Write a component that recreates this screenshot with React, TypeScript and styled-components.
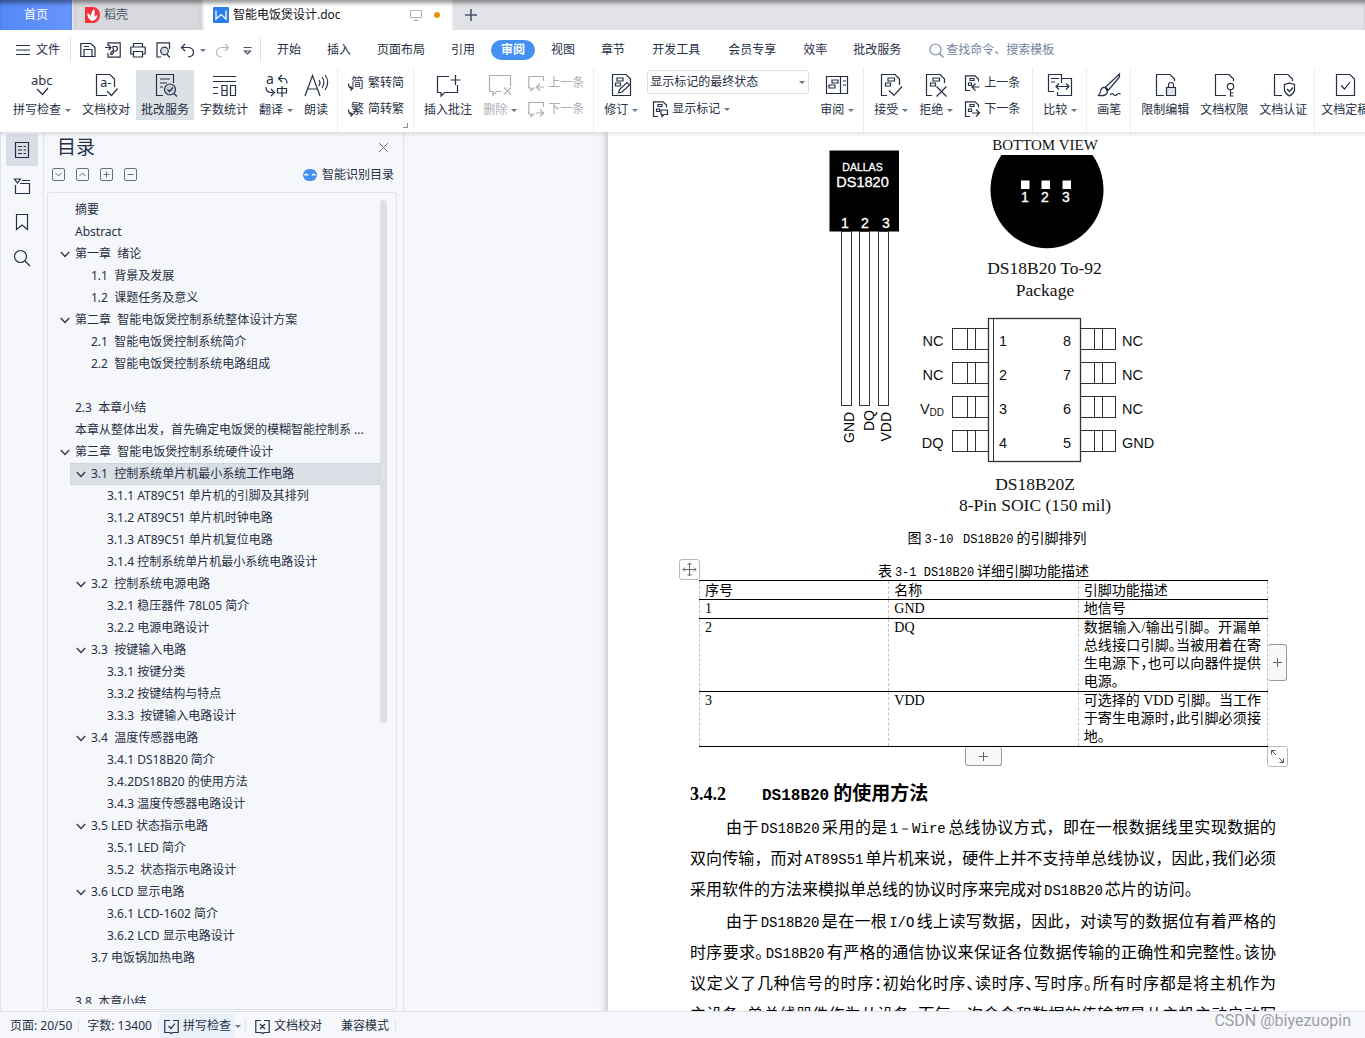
import React from 'react';
import styled, { createGlobalStyle, css } from 'styled-components';

const ink = '#262f45';
const line = '#dfe2e8';
const panelBg = '#f6f7fa';

const GlobalStyle = createGlobalStyle`
  * { box-sizing: border-box; }
  body {
    margin: 0;
    font-family: "Noto Sans", "Noto Sans CJK SC", sans-serif;
    font-size: 12px;
    line-height: 16px;
    color: ${ink};
    background: #fff;
  }
  button, input, select { font: inherit; color: inherit; }
  button { border: 0; padding: 0; background: none; cursor: pointer; white-space: nowrap; }
`;

const Shell = styled.div`
  display: flex;
  flex-direction: column;
  height: 100vh;
  overflow: hidden;
`;

/* ---------- window tabs ---------- */
const TabBar = styled.header`
  display: flex;
  flex: none;
  height: 30px;
  gap: 2px;
  background: #e1e3e6;
  box-shadow: inset 0 5px 4px -2px rgba(0, 0, 0, 0.42);
`;

const Tab = styled.button<{ $kind: 'home' | 'idle' | 'active' }>`
  display: flex;
  align-items: center;
  gap: 4px;
  box-shadow: inset 0 5px 4px -2px rgba(0, 0, 0, 0.42);
  ${(p) => p.$kind === 'home' && css`
    width: 72px;
    justify-content: center;
    color: #fff;
    background: linear-gradient(90deg, #5488f7, #6796fb);
  `}
  ${(p) => p.$kind === 'idle' && css`
    width: 127px;
    padding-left: 11px;
    background: #d7d9dd;
    color: #4a5163;
  `}
  ${(p) => p.$kind === 'active' && css`
    width: 250px;
    padding: 0 13px 0 10px;
    background: #fff;
    color: #111;
  `}
`;

const TabTitle = styled.span`
  flex: 1;
  text-align: left;
`;

const UnsavedDot = styled.i`
  width: 6px;
  height: 6px;
  margin-left: 8px;
  border-radius: 50%;
  background: #e8940c;
`;

const NewTab = styled.button`
  width: 32px;
  display: grid;
  place-items: center;
`;

/* ---------- menu row ---------- */
const MenuBar = styled.nav`
  display: flex;
  flex: none;
  align-items: center;
  height: 38px;
  padding: 2px 0 0 16px;
  background: #fff;
`;

const FileButton = styled.button`
  display: flex;
  align-items: center;
  gap: 6px;
`;

const MenuRule = styled.i<{ $left: number; $right: number }>`
  width: 1px;
  height: 24px;
  background: ${line};
  margin: 0 ${(p) => p.$right}px 0 ${(p) => p.$left}px;
`;

const QuickTools = styled.div`
  display: flex;
  align-items: center;
  gap: 9px;
`;

const IconButton = styled.button`
  display: flex;
  align-items: center;
  gap: 5px;
`;

const MenuItem = styled.button<{ $wide?: boolean }>`
  padding: 0 ${(p) => (p.$wide ? 14 : 13)}px;
`;

const MenuPill = styled.button`
  margin: 0 3px;
  padding: 0 10px;
  height: 20px;
  border-radius: 10px;
  background: #4490f3;
  color: #fff;
  font-weight: 700;
`;

const Search = styled.label`
  display: flex;
  align-items: center;
  gap: 2px;
  margin-left: 15px;
  color: #7d8ba5;
`;

const SearchInput = styled.input`
  width: 160px;
  border: 0;
  padding: 0;
  outline: 0;
  background: none;
  &::placeholder { color: #75839f; opacity: 1; }
`;

/* ---------- ribbon ---------- */
const Ribbon = styled.div`
  display: flex;
  flex: none;
  height: 64px;
  padding-left: 8px;
  background: #fff;
  overflow: hidden;
`;

const Group = styled.div`
  position: relative;
  display: flex;
  flex: none;
  gap: 1px;
  padding-top: 2px;
`;

const RibbonRule = styled.i<{ $tight?: boolean }>`
  flex: none;
  width: 1px;
  margin: ${(p) => (p.$tight ? '0 1px 0 2px' : '0 5px 0 4px')};
  background: #eceef1;
`;

const Tool = styled.button<{ $on?: boolean; $off?: boolean }>`
  flex: none;
  display: flex;
  flex-direction: column;
  align-items: center;
  height: 50px;
  padding: 3px 5px 0;
  gap: 5px;
  background: ${(p) => (p.$on ? '#dce1e6' : 'none')};
  color: ${(p) => (p.$off ? '#a9adb5' : ink)};
`;

const ToolLabel = styled.span`
  display: flex;
  align-items: center;
  gap: 4px;
`;

const Caret = styled.i`
  width: 0;
  height: 0;
  border: 3px solid transparent;
  border-top: 3px solid #6b7689;
  border-bottom: 0;
`;

const Stack = styled.div<{ $end?: number }>`
  display: flex;
  flex-direction: column;
  gap: 10px;
  padding: 5px 5px 0;
  margin-right: ${(p) => p.$end ?? 0}px;
`;

const StackTool = styled.button<{ $off?: boolean }>`
  display: flex;
  align-items: center;
  gap: 4px;
  height: 16px;
  color: ${(p) => (p.$off ? '#a9adb5' : ink)};
`;

const MarkupStack = styled.div`
  display: flex;
  flex-direction: column;
  gap: 7px;
  margin: 0 5px 0 3px;
`;

const SelectBox = styled.div`
  position: relative;
  width: 162px;
  height: 24px;
`;

const Select = styled.select`
  width: 100%;
  height: 100%;
  padding: 0 2px;
  appearance: none;
  border: 1px solid #dcdfe4;
  border-radius: 3px;
  background: #fff;
`;

const SelectCaret = styled(Caret)`
  position: absolute;
  right: 4px;
  top: 11px;
  pointer-events: none;
`;

const MarkupTool = styled(StackTool)`
  padding-left: 5px;
`;

const Launcher = styled.i`
  position: absolute;
  right: 1px;
  bottom: 4px;
  width: 5px;
  height: 5px;
  border: solid #858e9e;
  border-width: 0 1px 1px 0;
`;

/* ---------- work area ---------- */
const Work = styled.div`
  position: relative;
  display: flex;
  flex: 1;
  min-height: 0;
  background: ${panelBg};
  border-bottom: 1px solid ${line};
  &::before {
    content: '';
    position: absolute;
    inset: 0 0 auto 0;
    height: 5px;
    background: linear-gradient(rgba(60, 66, 80, 0.14), transparent);
    pointer-events: none;
    z-index: 2;
  }
`;

const Rail = styled.nav`
  flex: none;
  width: 44px;
  padding: 2px 5px;
  border: solid ${line};
  border-width: 0 1px;
  display: flex;
  flex-direction: column;
  gap: 4px;
`;

const RailButton = styled.button<{ $on?: boolean }>`
  width: 32px;
  height: 32px;
  display: grid;
  place-items: center;
  border-radius: 2px;
  background: ${(p) => (p.$on ? '#d9dee6' : 'none')};
`;

const Outline = styled.aside`
  flex: none;
  width: 360px;
  display: flex;
  flex-direction: column;
  padding: 3px 6px 0 3px;
  border-right: 1px solid ${line};
`;

const OutlineHead = styled.div`
  display: flex;
  align-items: center;
  justify-content: space-between;
  padding: 0 8px 0 10px;
  height: 24px;
`;

const OutlineTitle = styled.h2`
  margin: 0;
  font-size: 19px;
  line-height: 24px;
  font-weight: 400;
`;

const OutlineTools = styled.div`
  display: flex;
  align-items: center;
  gap: 10px;
  height: 30px;
  padding: 1px 3px 0 5px;
`;

const SmartButton = styled.button`
  display: flex;
  align-items: center;
  gap: 5px;
  margin-left: auto;
`;

const TreeBox = styled.div`
  flex: 1;
  min-height: 0;
  display: flex;
  margin-top: 3px;
  margin-bottom: 1px;
  padding: 6px 10px 5px;
  border: 1px solid ${line};
  border-radius: 3px;
`;

const Tree = styled.ul`
  flex: 1;
  min-width: 0;
  margin: 0;
  padding: 0 0 0 12px;
  list-style: none;
  overflow: hidden;
`;

const TreeItem = styled.li`
  height: 22px;
`;

const TreeRow = styled.button<{ $level: number; $on?: boolean }>`
  display: flex;
  align-items: center;
  width: 100%;
  height: 22px;
  padding-left: ${(p) => p.$level * 16 - 16}px;
  background: ${(p) => (p.$on ? '#dadfe6' : 'none')};
  box-shadow: ${(p) => (p.$on ? 'inset 0 0 0 1px #d0d6df' : 'none')};
`;

const Twist = styled.span`
  flex: none;
  display: grid;
  width: 10px;
  margin-left: -10px;
  margin-right: 5px;
`;

const TreeText = styled.span<{ $plain: boolean }>`
  padding-left: ${(p) => (p.$plain ? 5 : 0)}px;
  padding-right: 10px;
  white-space: pre;
  overflow: hidden;
  text-overflow: ellipsis;
`;

const Thumb = styled.i`
  flex: none;
  width: 7px;
  height: 65%;
  margin-top: 1px;
  margin-right: -1px;
  border-radius: 4px;
  background: #dee1e4;
`;

/* ---------- document ---------- */
const Canvas = styled.main`
  flex: 1;
  min-width: 0;
  padding-left: 204px;
  overflow: hidden;
`;

const Paper = styled.article`
  min-height: 100%;
  padding: 0 82px;
  background: #fff;
  color: #000;
  box-shadow: -2px 0 7px rgba(60, 66, 80, 0.28);
`;

const Column = styled.div`
  width: 100%;
  max-width: 586px;
`;

const Figure = styled.figure`
  margin: 0;
`;

const Drawing = styled.svg`
  display: block;
  width: 100%;
  height: auto;
`;

const Mono = styled.span`
  font-family: "Liberation Mono", monospace;
  font-size: 14px;
  line-height: 1;
  margin: 0 2px;
`;

const MonoSmall = styled(Mono)`
  font-size: 12px;
  margin: 0 3px;
`;

const MonoBold = styled(Mono)`
  font-size: 16px;
  margin: 0 4px 0 0;
`;

const Serif = styled.span`
  font-family: "Liberation Serif", serif;
`;

const Trim = styled.span`
  font-feature-settings: "halt";
`;

const FigCaption = styled.figcaption`
  padding-top: 7px;
  font-size: 14px;
  line-height: 18px;
  text-align: center;
  text-indent: 28px;
  white-space: pre;
`;

const TableWrap = styled.div`
  position: relative;
  margin: 15px 8px 0 9px;
`;

const Table = styled.table`
  width: 100%;
  table-layout: fixed;
  border-collapse: collapse;
  font-size: 14px;
  line-height: 18px;
`;

const TableCaption = styled.caption`
  margin: 0;
`;

const cellStyle = css`
  padding: 0 6px 0 5px;
  vertical-align: top;
  text-align: left;
  font-weight: 400;
  border: solid #000;
  border-width: 1px 0;
  &:nth-child(n) { border-left: 1px dashed #c3c3c3; }
  &:last-child { border-right: 1px dashed #c3c3c3; }
`;

const Th = styled.th`${cellStyle}`;
const Td = styled.td`
  ${cellStyle}
  font-family: "Liberation Serif", "Noto Sans CJK SC", serif;
`;

const CellLine = styled.span<{ $last?: boolean; $trim?: boolean }>`
  display: block;
  white-space: nowrap;
  text-align: justify;
  text-align-last: ${(p) => (p.$last ? 'left' : 'justify')};
  font-feature-settings: ${(p) => (p.$trim ? '"halt"' : 'normal')};
`;

const Handle = styled.button<{ $at: 'move' | 'row' | 'column' | 'size' }>`
  position: absolute;
  display: grid;
  place-items: center;
  background: #fff;
  border: 1px solid #b9b9b9;
  border-radius: 3px;
  ${(p) => p.$at === 'move' && css`left: -20px; top: -3px; width: 21px; height: 21px;`}
  ${(p) => p.$at === 'size' && css`right: -20px; bottom: -20px; width: 21px; height: 21px;`}
  ${(p) => p.$at === 'row' && css`
    left: calc(50% - 19px); bottom: -19px; width: 37px; height: 19px;
    border-top: 0; background: #f8f8f8; border-color: #999;
  `}
  ${(p) => p.$at === 'column' && css`
    right: -19px; bottom: 66px; width: 19px; height: 37px;
    border-left: 0; background: #f8f8f8; border-color: #999;
  `}
`;

const Heading = styled.h3`
  display: flex;
  align-items: baseline;
  margin: 32px 0 4px;
  font-size: 19px;
  line-height: 28px;
  font-weight: 700;
`;

const HeadingNumber = styled.span`
  width: 72px;
  font-family: "Liberation Serif", serif;
  font-size: 18px;
`;

const Paragraph = styled.p`
  margin: 0 0 1px;
  font-size: 16px;
  line-height: 31px;
`;

const TextLine = styled.span<{ $indent?: boolean; $last?: boolean; $trim?: boolean }>`
  display: block;
  white-space: nowrap;
  padding-left: ${(p) => (p.$indent ? 36 : 0)}px;
  text-align: justify;
  text-align-last: ${(p) => (p.$last ? 'left' : 'justify')};
  font-feature-settings: ${(p) => (p.$trim ? '"halt"' : 'normal')};
`;

/* ---------- status bar ---------- */
const StatusBar = styled.footer`
  display: flex;
  flex: none;
  align-items: center;
  height: 26px;
  padding: 2px 14px 0 10px;
  background: ${panelBg};
  white-space: nowrap;
`;

const StatusRule = styled.i<{ $left?: number; $right?: number }>`
  width: 1px;
  height: 14px;
  background: ${line};
  margin: 0 ${(p) => p.$right ?? 8}px 0 ${(p) => p.$left ?? 6}px;
`;

const StatusButton = styled.button<{ $tint?: boolean }>`
  display: flex;
  align-items: center;
  gap: 4px;
  height: 24px;
  padding: 0 4px;
  background: ${(p) => (p.$tint ? '#e9f1fb' : 'none')};
`;

const StatusText = styled.span`
  margin-left: 15px;
`;

const Watermark = styled.span`
  margin-left: auto;
  padding-bottom: 10px;
  font-family: Roboto, sans-serif;
  font-size: 16px;
  color: #9c9fa5;
`;

/* ---------- icons ---------- */
type GlyphProps = { size?: number; w?: number; box?: number; children: React.ReactNode; color?: string };
const Glyph = ({ size = 24, w, box = 24, children, color = 'currentColor' }: GlyphProps) => (
  <svg
    width={w ?? size}
    height={size}
    viewBox={`0 0 ${w ?? box} ${box}`}
    overflow="visible"
    fill="none"
    stroke={color}
    strokeWidth={1.2}
    aria-hidden="true"
  >
    {children}
  </svg>
);

const GlyphText = ({ x, y, s, children }: { x: number; y: number; s: number; children: string }) => (
  <text x={x} y={y} fontSize={s} fill="currentColor" stroke="none">{children}</text>
);

const docEdge = 'M8 22.5H2.5V1.5H16L20.5 6V10';
const marks = <path d="M9 5h6.500v3H9zM6.500 10h5v3h-5z" />;

const icons = {
  spell: (
    <Glyph w={26}>
      <GlyphText x={2} y={12} s={13}>abc</GlyphText>
      <path d="M8 16l5.500 5.500L19 15" />
    </Glyph>
  ),
  proof: (
    <Glyph>
      <path d="M13 22.500H2.500V1.500H16L20.500 6V14" />
      <GlyphText x={6} y={14} s={13}>a-</GlyphText>
      <path d="M13 18l4.500 4.500L23.500 15.500" />
    </Glyph>
  ),
  correct: (
    <Glyph>
      <path d="M10 22.500H3.500V1.500H20.500V10M7 6h10M7 10h7M7 14h3" />
      <circle cx="17" cy="16.500" r="5.500" fill="#c9ced6" />
      <path d="M14.500 16.500l2 2 3.500-4M21 20.500l3 3" />
    </Glyph>
  ),
  count: (
    <Glyph>
      <path d="M1 3.500h23M1 8.500h23M1 14.500h5M1 20.500h5M10 12.500h5v10h-5zM10 17.500h5M18.500 12.500h5v10h-5z" />
    </Glyph>
  ),
  translate: (
    <Glyph>
      <GlyphText x={2} y={11} s={14}>a</GlyphText>
      <path d="M18 2l-3.500 3.500L18 9M15 5.500h4.500q3.500 0 3.500 5M2 14q0 5.500 5 5.500h2M7 16l3.500 3.500L7 23M13.500 15.500h9v4.500h-9zM18 13v11" />
    </Glyph>
  ),
  read: (
    <Glyph>
      <path d="M1 23L8.500 2.500L16 23M3.500 16h10M15 7q2 2.500 0 6M18 4q4 5 0 11M21 2q5.500 7 0 15" />
    </Glyph>
  ),
  comment: (
    <Glyph w={26}>
      <path d="M14 3.500H2.500V19.500H6V23l3.500-3.500H22.500V12M20.500 2v10M15.500 7h10" />
    </Glyph>
  ),
  remove: (
    <Glyph>
      <path d="M22.500 13V2.500H1.500V18.500H5V22l3.500-3.500H13M16 14.500l7 7M23 14.500l-7 7" />
    </Glyph>
  ),
  revise: (
    <Glyph>
      <path d="M3.500 1.500H17L21.500 6V22.500H3.500zM8 5h6v3H8zM6.500 10h5v3h-5z" />
      <path d="M9.500 20l1-3.500L18 9.500l2.500 2.500L13 19z" fill="#fff" />
    </Glyph>
  ),
  pane: (
    <Glyph>
      <path d="M1.500 3.500h21v17h-21zM15.500 3.500v17M7 7h6v3H7zM4 12h6v3H4zM18 8h3M18 12h3" />
    </Glyph>
  ),
  accept: (
    <Glyph>
      <path d="M8 22.500H2.500V1.500H16L20.500 6V12" />
      {marks}
      <path d="M10 17.500l5 5 8-9" />
    </Glyph>
  ),
  reject: (
    <Glyph>
      <path d={docEdge} />
      {marks}
      <path d="M12.500 13.500l10 10M22.500 13.500l-10 10" />
    </Glyph>
  ),
  compare: (
    <Glyph w={26}>
      <path d="M7 18.500H1.500V1.500H14.500V5.500H24.500V22.500H10.500V19M4 5.500h8M4 9h4M9 13.500h13M12 10.500l-3 3 3 3M19 10.500l3 3-3 3M14.500 5.500V10" />
    </Glyph>
  ),
  brush: (
    <Glyph>
      <path d="M22.500 1L8.500 14l3 3L22.500 4zM8 14.500q-4-.5-4.500 4Q3 22 .8 22.500q8.500 1 9.500-3 .5-2-2.300-5M13 22q2-2.500 3.500-.5t3.500 0 3.500 0" />
    </Glyph>
  ),
  restrict: (
    <Glyph>
      <path d="M11 22.500H3.500V1.500H17L21.500 6V8" />
      <path d="M13.500 14.500h9v8h-9z" fill="#dfe2e8" />
      <path d="M15.500 14v-2q0-2.500 2.500-2.500t2.500 2.500v2" />
    </Glyph>
  ),
  permit: (
    <Glyph>
      <path d="M14 22.500H3.500V1.500H17L21.500 6V8" />
      <circle cx="18.500" cy="13.500" r="3.200" />
      <path d="M18.500 17v6.500M18.500 20h3M18.500 23h3" />
    </Glyph>
  ),
  certify: (
    <Glyph>
      <path d="M11 22.500H3.500V1.500H17L21.500 6V8M18.500 10l5 1.500v6q-1 3.500-5 5.500-4-2-5-5.500v-6zM16 16l2.500 2.500 3.500-4" />
    </Glyph>
  ),
  final: (
    <Glyph>
      <path d="M3.500 1.500H17L21.500 6V22.500H3.500zM8 12.500l3.500 3.500 5.500-7" />
    </Glyph>
  ),
};

const SmallConvert = ({ char }: { char: string }) => (
  <Glyph size={16} box={16}>
    <GlyphText x={3} y={12} s={13}>{char}</GlyphText>
    <path d="M.500 8.500q0 5 4 5M2.500 11.500l2 2-2 2" />
  </Glyph>
);

const SmallComment = ({ dir }: { dir: 'back' | 'next' }) => (
  <Glyph size={16} box={16}>
    <path d="M15.500 6V1.500H.800V13H3V15.500L5.500 13H7" />
    {dir === 'back' ? <path d="M16 12H9M12 8.500L8.500 12l3.500 3.500" /> : <path d="M8 12h7.500M12 8.500l3.500 3.500-3.500 3.500" />}
  </Glyph>
);

const SmallRevision = ({ dir }: { dir: 'back' | 'next' | 'show' }) => (
  <Glyph size={16} box={16}>
    <path d="M6 15.500H1.500V.800H11L14.500 4V6.500M6 3.500h4v2H6zM4.500 8h3v2.500h-3z" />
    {dir === 'back' && <path d="M15.500 12H8.500M11.500 8.500L8 12l3.500 3.500" />}
    {dir === 'next' && <path d="M8 12h7M12 8.500l3.500 3.500-3.500 3.500" />}
    {dir === 'show' && <path d="M9 9h6.500v4.500H12l-2 2v-2H9z" />}
  </Glyph>
);

const SquareToggle = ({ d }: { d: string }) => (
  <svg width="14" height="14" viewBox="0 0 14 14" fill="none" stroke="#697180" aria-hidden="true">
    <rect x="0.500" y="0.500" width="12" height="12" rx="1.500" />
    <path d={d} />
  </svg>
);

const Plus = () => (
  <svg width="11" height="11" viewBox="0 0 11 11" stroke="#666" aria-hidden="true">
    <path d="M5.500 1v9M1 5.500h9" />
  </svg>
);

/* ---------- ribbon pieces ---------- */
type ToolButtonProps = { icon: React.ReactNode; label: string; caret?: boolean; on?: boolean; off?: boolean };
const ToolButton = ({ icon, label, caret, on, off }: ToolButtonProps) => (
  <Tool type="button" $on={on} $off={off}>
    {icon}
    <ToolLabel>{label}{caret && <Caret />}</ToolLabel>
  </Tool>
);

/* ---------- outline data ---------- */
type Node = { t: string; l: number; open?: boolean; on?: boolean };
const outline: Node[] = [
  { t: '摘要', l: 1 },
  { t: 'Abstract', l: 1 },
  { t: '第一章  绪论', l: 1, open: true },
  { t: '1.1  背景及发展', l: 2 },
  { t: '1.2  课题任务及意义', l: 2 },
  { t: '第二章  智能电饭煲控制系统整体设计方案', l: 1, open: true },
  { t: '2.1  智能电饭煲控制系统简介', l: 2 },
  { t: '2.2  智能电饭煲控制系统电路组成', l: 2 },
  { t: '', l: 1 },
  { t: '2.3  本章小结', l: 1 },
  { t: '本章从整体出发，首先确定电饭煲的模糊智能控制系 ...', l: 1 },
  { t: '第三章  智能电饭煲控制系统硬件设计', l: 1, open: true },
  { t: '3.1  控制系统单片机最小系统工作电路', l: 2, open: true, on: true },
  { t: '3.1.1 AT89C51 单片机的引脚及其排列', l: 3 },
  { t: '3.1.2 AT89C51 单片机时钟电路', l: 3 },
  { t: '3.1.3 AT89C51 单片机复位电路', l: 3 },
  { t: '3.1.4 控制系统单片机最小系统电路设计', l: 3 },
  { t: '3.2  控制系统电源电路', l: 2, open: true },
  { t: '3.2.1 稳压器件 78L05 简介', l: 3 },
  { t: '3.2.2 电源电路设计', l: 3 },
  { t: '3.3  按键输入电路', l: 2, open: true },
  { t: '3.3.1 按键分类', l: 3 },
  { t: '3.3.2 按键结构与特点', l: 3 },
  { t: '3.3.3  按键输入电路设计', l: 3 },
  { t: '3.4  温度传感器电路', l: 2, open: true },
  { t: '3.4.1 DS18B20 简介', l: 3 },
  { t: '3.4.2DS18B20 的使用方法', l: 3 },
  { t: '3.4.3 温度传感器电路设计', l: 3 },
  { t: '3.5 LED 状态指示电路', l: 2, open: true },
  { t: '3.5.1 LED 简介', l: 3 },
  { t: '3.5.2  状态指示电路设计', l: 3 },
  { t: '3.6 LCD 显示电路', l: 2, open: true },
  { t: '3.6.1 LCD-1602 简介', l: 3 },
  { t: '3.6.2 LCD 显示电路设计', l: 3 },
  { t: '3.7 电饭锅加热电路', l: 2 },
  { t: '', l: 1 },
  { t: '3.8  本章小结', l: 1 },
];

/* ---------- pinout drawing ---------- */
const sans = '"Liberation Sans", sans-serif';
const serif = '"Liberation Serif", serif';
const leftPins = ['NC', 'NC', 'V', 'DQ'];
const rightPins = ['NC', 'NC', 'NC', 'GND'];
const pinTop = [329, 363, 397, 431];

const Pinout = () => (
  <Drawing viewBox="690 132 586 390" role="img" aria-label="DS18B20">
    <rect x="829.500" y="150.500" width="69.500" height="81" fill="#000" />
    <g fontFamily={sans} fill="#fff" stroke="#fff" strokeWidth="0.300" textAnchor="middle">
      <text x="862.500" y="171" fontSize="10.500">DALLAS</text>
      <text x="862.500" y="186.500" fontSize="14.500">DS1820</text>
      <text x="845" y="227.500" fontSize="14">1</text>
      <text x="865" y="227.500" fontSize="14">2</text>
      <text x="886" y="227.500" fontSize="14">3</text>
    </g>
    <g fill="#fff" stroke="#333">
      {[841.5, 859.5, 878.5].map((x) => <rect key={x} x={x} y="231.500" width="10" height="174" />)}
    </g>
    <g fontFamily={sans} fontSize="14" fill="#000">
      <text transform="translate(854 443) rotate(-90)">GND</text>
      <text transform="translate(873.500 431) rotate(-90)">DQ</text>
      <text transform="translate(890.500 441.500) rotate(-90)">VDD</text>
    </g>
    <path d="M1001.500 155H1092.500A56.500 58.500 0 1 1 1001.500 155Z" fill="#000" />
    <g fill="#fff">
      <rect x="1021" y="180.500" width="8.500" height="8.500" />
      <rect x="1041.500" y="180.500" width="8.500" height="8.500" />
      <rect x="1062.500" y="180.500" width="8.500" height="8.500" />
    </g>
    <g fontFamily={sans} fontSize="14" fill="#fff" stroke="#fff" strokeWidth="0.300" textAnchor="middle">
      <text x="1025" y="201.500">1</text>
      <text x="1045" y="201.500">2</text>
      <text x="1066" y="201.500">3</text>
    </g>
    <g fontFamily={serif} fill="#111" textAnchor="middle">
      <text x="1045" y="150" fontSize="15">BOTTOM VIEW</text>
      <text x="1044.500" y="274" fontSize="17.500">DS18B20 To-92</text>
      <text x="1045" y="295.500" fontSize="17.500">Package</text>
      <text x="1035" y="490" fontSize="17.500">DS18B20Z</text>
      <text x="1035" y="511" fontSize="17.500">8-Pin SOIC (150 mil)</text>
    </g>
    <g fill="#fff" stroke="#333">
      {pinTop.map((y) => (
        <g key={y}>
          <rect x="952.500" y={y - 0.5} width="36" height="21" />
          <path d={`M967.500 ${y}v20M975.500 ${y}v20`} />
          <rect x="1080.500" y={y - 0.5} width="35" height="21" />
          <path d={`M1094.500 ${y}v20M1102.500 ${y}v20`} />
        </g>
      ))}
      <rect x="988.500" y="318.500" width="92" height="143" strokeWidth="1.300" />
      <path d="M993.500 319v142" />
    </g>
    <g fontFamily={sans} fontSize="14.500" fill="#111">
      {pinTop.map((y, i) => (
        <g key={y}>
          {leftPins[i] === 'V' ? (
            <text x="944" y={y + 17} textAnchor="end">V<tspan fontSize="10" dy="2">DD</tspan></text>
          ) : (
            <text x="943.500" y={y + 16.500} textAnchor="end">{leftPins[i]}</text>
          )}
          <text x="999" y={y + 17}>{i + 1}</text>
          <text x="1071" y={y + 17} textAnchor="end">{8 - i}</text>
          <text x="1122" y={y + 16.500}>{rightPins[i]}</text>
        </g>
      ))}
    </g>
  </Drawing>
);

export default function App() {
  return (
    <Shell>
      <GlobalStyle />
      <TabBar>
        <Tab type="button" $kind="home">首页</Tab>
        <Tab type="button" $kind="idle">
          <svg width="15" height="16" viewBox="0 0 15 16" aria-hidden="true">
            <path d="M0 0H8a7 8 0 0 1 0 16H0z" fill="#f5303a" />
            <path d="M7 14Q1.500 11 2.500 6Q6.500 8 7 12Q4.500 6 9 2Q11 7 8 12Q9 8.500 12.500 8Q12 13 7 14z" fill="#fff" />
          </svg>
          <TabTitle>稻壳</TabTitle>
        </Tab>
        <Tab type="button" $kind="active">
          <svg width="16" height="16" viewBox="0 0 16 16" aria-hidden="true">
            <rect width="16" height="16" rx="1" fill="#2b7de9" />
            <path d="M3 3.500V12L8 7.500 13 12V3.500" fill="none" stroke="#fff" strokeWidth="1.300" />
          </svg>
          <TabTitle>智能电饭煲设计.doc</TabTitle>
          <svg width="12" height="12" viewBox="0 0 12 12" fill="none" stroke="#a9b1c4" aria-hidden="true">
            <path d="M.5 1.500h11v7H.500zM6 8.500v3M3.500 11.500h5" />
          </svg>
          <UnsavedDot />
        </Tab>
        <NewTab type="button" aria-label="+">
          <svg width="12" height="12" viewBox="0 0 12 12" stroke="#47546b" strokeWidth="1.600" aria-hidden="true">
            <path d="M6 0v12M0 6h12" />
          </svg>
        </NewTab>
      </TabBar>

      <MenuBar>
        <FileButton type="button">
          <svg width="14" height="10" viewBox="0 0 14 10" stroke={ink} aria-hidden="true">
            <path d="M0 .5h14M0 5h14M0 9.500h14" />
          </svg>
          文件
        </FileButton>
        <MenuRule $left={10} $right={9} />
        <QuickTools>
          <IconButton type="button" aria-label="保存">
            <Glyph size={16} box={16}><path d="M.800 1.500H11L15 5.500V14.500H.800zM4 14V7.500H12V14M4 4.500h5" /></Glyph>
          </IconButton>
          <IconButton type="button" aria-label="输出">
            <Glyph size={16} box={16}><path d="M3 4V.800H15.200V15.200H3V11M0 5.500h5.500M3.500 3l2.500 2.500L3.500 8M8 4.500h3.500q2 2 0 4.500H8.500q-2.500 0-3 3 2 1 3-1.500z" /></Glyph>
          </IconButton>
          <IconButton type="button" aria-label="打印">
            <Glyph size={16} box={16}><path d="M3.500 5V1.500h9V5M3.500 12H.800V5H15.200V12H12.500M3.500 9.500h9v5.500h-9z" /></Glyph>
          </IconButton>
          <IconButton type="button" aria-label="预览">
            <Glyph size={16} box={16}>
              <path d="M6 15H2V.800H14.500V7M12 12.500l3 3" />
              <circle cx="9.500" cy="9" r="3.800" fill="#d5dae2" />
            </Glyph>
          </IconButton>
          <IconButton type="button" aria-label="撤销">
            <Glyph size={15} box={15}><path d="M5 1L1.500 4.500 5 8M2 4.500h6.500q5 .5 5 5 0 4-5.500 4.500" /></Glyph>
            <Caret />
          </IconButton>
          <IconButton type="button" aria-label="恢复">
            <Glyph size={15} box={15} color="#b5b8bd"><path d="M10 1l3.500 3.500L10 8M13 4.500H6.500q-5 .5-5 5 0 4 5.500 4.500" /></Glyph>
          </IconButton>
          <IconButton type="button" aria-label="更多">
            <Glyph size={16} box={16} color="#4a5265"><path d="M4.500 5.500h8M5.500 9l3 3 3-3z" /></Glyph>
          </IconButton>
        </QuickTools>
        <MenuRule $left={5} $right={3} />
        <MenuItem type="button">开始</MenuItem>
        <MenuItem type="button">插入</MenuItem>
        <MenuItem type="button">页面布局</MenuItem>
        <MenuItem type="button">引用</MenuItem>
        <MenuPill type="button">审阅</MenuPill>
        <MenuItem type="button">视图</MenuItem>
        <MenuItem type="button">章节</MenuItem>
        <MenuItem type="button" $wide>开发工具</MenuItem>
        <MenuItem type="button" $wide>会员专享</MenuItem>
        <MenuItem type="button">效率</MenuItem>
        <MenuItem type="button">批改服务</MenuItem>
        <Search>
          <Glyph size={15} box={15}><circle cx="6.500" cy="6.500" r="5.500" /><path d="M10.500 10.500l4 4" /></Glyph>
          <SearchInput type="text" placeholder="查找命令、搜索模板" aria-label="查找命令、搜索模板" />
        </Search>
      </MenuBar>

      <Ribbon>
        <Group>
          <ToolButton icon={icons.spell} label="拼写检查" caret />
          <ToolButton icon={icons.proof} label="文档校对" />
          <ToolButton icon={icons.correct} label="批改服务" on />
          <ToolButton icon={icons.count} label="字数统计" />
          <ToolButton icon={icons.translate} label="翻译" caret />
          <ToolButton icon={icons.read} label="朗读" />
        </Group>
        <RibbonRule />
        <Group>
          <Stack>
            <StackTool type="button"><SmallConvert char="简" />繁转简</StackTool>
            <StackTool type="button"><SmallConvert char="繁" />简转繁</StackTool>
          </Stack>
          <Launcher />
        </Group>
        <RibbonRule />
        <Group>
          <ToolButton icon={icons.comment} label="插入批注" />
          <ToolButton icon={icons.remove} label="删除" caret off />
          <Stack>
            <StackTool type="button" $off><SmallComment dir="back" />上一条</StackTool>
            <StackTool type="button" $off><SmallComment dir="next" />下一条</StackTool>
          </Stack>
        </Group>
        <RibbonRule />
        <Group>
          <ToolButton icon={icons.revise} label="修订" caret />
          <MarkupStack>
            <SelectBox>
              <Select aria-label="显示标记的最终状态" defaultValue="final">
                <option value="final">显示标记的最终状态</option>
              </Select>
              <SelectCaret />
            </SelectBox>
            <MarkupTool type="button"><SmallRevision dir="show" />显示标记<Caret /></MarkupTool>
          </MarkupStack>
          <ToolButton icon={icons.pane} label="审阅" caret />
        </Group>
        <RibbonRule />
        <Group>
          <ToolButton icon={icons.accept} label="接受" caret />
          <ToolButton icon={icons.reject} label="拒绝" caret />
          <Stack $end={3}>
            <StackTool type="button"><SmallRevision dir="back" />上一条</StackTool>
            <StackTool type="button"><SmallRevision dir="next" />下一条</StackTool>
          </Stack>
        </Group>
        <RibbonRule />
        <Group><ToolButton icon={icons.compare} label="比较" caret /></Group>
        <RibbonRule />
        <Group><ToolButton icon={icons.brush} label="画笔" /></Group>
        <RibbonRule />
        <Group>
          <ToolButton icon={icons.restrict} label="限制编辑" />
          <ToolButton icon={icons.permit} label="文档权限" />
          <ToolButton icon={icons.certify} label="文档认证" />
        </Group>
        <RibbonRule $tight />
        <Group><ToolButton icon={icons.final} label="文档定稿" /></Group>
      </Ribbon>

      <Work>
        <Rail>
          <RailButton type="button" $on aria-label="目录">
            <Glyph size={18} box={18}><path d="M2.500 1.500h13v15h-13zM5 5.500h4M10.500 5.500h2.500M5 9h4M10.500 9h2.500M5 12.500h4M10.500 12.500h2.500" /></Glyph>
          </RailButton>
          <RailButton type="button" aria-label="章节">
            <Glyph size={18} box={18}><path d="M1.500 2h6l-3 4zM9 3.500h8M2.500 8V16.500H16.500V6.500H7" /></Glyph>
          </RailButton>
          <RailButton type="button" aria-label="书签">
            <Glyph size={18} box={18}><path d="M3.500 1.500h11v15L9 12l-5.500 4.500z" /></Glyph>
          </RailButton>
          <RailButton type="button" aria-label="查找">
            <Glyph size={18} box={18}><circle cx="7.500" cy="7.500" r="6" /><path d="M12 12l5 5" /></Glyph>
          </RailButton>
        </Rail>

        <Outline>
          <OutlineHead>
            <OutlineTitle>目录</OutlineTitle>
            <IconButton type="button" aria-label="关闭">
              <svg width="11" height="11" viewBox="0 0 11 11" stroke="#6c7484" aria-hidden="true"><path d="M1 1l9 9M10 1l-9 9" /></svg>
            </IconButton>
          </OutlineHead>
          <OutlineTools>
            <IconButton type="button" aria-label="展开"><SquareToggle d="M3.500 5l3 3 3-3" /></IconButton>
            <IconButton type="button" aria-label="收起"><SquareToggle d="M3.500 8l3-3 3 3" /></IconButton>
            <IconButton type="button" aria-label="增加"><SquareToggle d="M6.500 3.500v6M3.500 6.500h6" /></IconButton>
            <IconButton type="button" aria-label="减少"><SquareToggle d="M3.500 6.500h6" /></IconButton>
            <SmartButton type="button">
              <svg width="14" height="12" viewBox="0 0 14 12" aria-hidden="true">
                <rect width="14" height="12" rx="6" fill="#4490f3" />
                <path d="M1.500 6.500q1.800-2.500 3.500 0M9 6.500q1.800-2.500 3.500 0" stroke="#fff" strokeWidth="1.400" fill="none" />
              </svg>
              智能识别目录
            </SmartButton>
          </OutlineTools>
          <TreeBox>
            <Tree>
              {outline.map((n, i) => (
                <TreeItem key={i}>
                  {n.t && (
                    <TreeRow type="button" $level={n.l} $on={n.on}>
                      {n.open && (
                        <Twist>
                          <svg width="10" height="7" viewBox="0 0 10 7" fill="none" stroke={ink} strokeWidth="1.200" aria-hidden="true">
                            <path d="M.800 1L5 5.500 9.200 1" />
                          </svg>
                        </Twist>
                      )}
                      <TreeText $plain={!n.open}>{n.t}</TreeText>
                    </TreeRow>
                  )}
                </TreeItem>
              ))}
            </Tree>
            <Thumb />
          </TreeBox>
        </Outline>

        <Canvas>
          <Paper>
            <Column>
              <Figure>
                <Pinout />
                <FigCaption>图<MonoSmall>3-10</MonoSmall> <MonoSmall>DS18B20</MonoSmall>的引脚排列</FigCaption>
              </Figure>

              <TableWrap>
                <Table>
                  <TableCaption>表<MonoSmall>3-1 DS18B20</MonoSmall>详细引脚功能描述</TableCaption>
                  <thead>
                    <tr><Th scope="col">序号</Th><Th scope="col">名称</Th><Th scope="col">引脚功能描述</Th></tr>
                  </thead>
                  <tbody>
                    <tr><Td>1</Td><Td>GND</Td><Td>地信号</Td></tr>
                    <tr>
                      <Td>2</Td>
                      <Td>DQ</Td>
                      <Td>
                        <CellLine>数据输入/输出引脚。开漏单</CellLine>
                        <CellLine $trim>总线接口引脚。当被用着在寄</CellLine>
                        <CellLine $trim>生电源下，也可以向器件提供</CellLine>
                        <CellLine $last>电源。</CellLine>
                      </Td>
                    </tr>
                    <tr>
                      <Td>3</Td>
                      <Td>VDD</Td>
                      <Td>
                        <CellLine>可选择的 <Serif>VDD</Serif> 引脚。当工作</CellLine>
                        <CellLine $trim>于寄生电源时，此引脚必须接</CellLine>
                        <CellLine $last>地。</CellLine>
                      </Td>
                    </tr>
                  </tbody>
                </Table>
                <Handle type="button" $at="move" aria-label="移动表格">
                  <svg width="15" height="15" viewBox="0 0 15 15" fill="none" stroke="#666" aria-hidden="true">
                    <path d="M7.500 1v13M1 7.500h13M5.500 3l2-2 2 2M5.500 12l2 2 2-2M3 5.500l-2 2 2 2M12 5.500l2 2-2 2" />
                  </svg>
                </Handle>
                <Handle type="button" $at="column" aria-label="添加列"><Plus /></Handle>
                <Handle type="button" $at="row" aria-label="添加行"><Plus /></Handle>
                <Handle type="button" $at="size" aria-label="缩放表格">
                  <svg width="15" height="15" viewBox="0 0 15 15" fill="none" stroke="#555" aria-hidden="true">
                    <path d="M1.500 5.500v-4h4M1.500 1.500l4.500 4.500M13.500 9.500v4h-4M13.500 13.500L9 9" />
                  </svg>
                </Handle>
              </TableWrap>

              <Heading>
                <HeadingNumber>3.4.2</HeadingNumber>
                <MonoBold>DS18B20</MonoBold>的使用方法
              </Heading>
              <Paragraph>
                <TextLine $indent>由于<Mono>DS18B20</Mono>采用的是<Mono>1－Wire</Mono>总线协议方式，即在一根数据线里实现数据的</TextLine>
                <TextLine>双向传输，而对<Mono>AT89S51</Mono>单片机来说，硬件上并不支持单总线协议，<Trim>因此，</Trim>我们必须</TextLine>
                <TextLine $last>采用软件的方法来模拟单总线的协议时序来完成对<Mono>DS18B20</Mono>芯片的访问。</TextLine>
              </Paragraph>
              <Paragraph>
                <TextLine $indent>由于<Mono>DS18B20</Mono>是在一根<Mono>I/O</Mono>线上读写数据，因此，对读写的数据位有着严格的</TextLine>
                <TextLine $trim>时序要求。<Mono>DS18B20</Mono>有严格的通信协议来保证各位数据传输的正确性和完整性。该协</TextLine>
                <TextLine $trim>议定义了几种信号的时序：初始化时序、读时序、写时序。所有时序都是将主机作为</TextLine>
                <TextLine $trim>主设备，单总线器件作为从设备。而每一次命令和数据的传输都是从主机主动启动写</TextLine>
              </Paragraph>
            </Column>
          </Paper>
        </Canvas>
      </Work>

      <StatusBar>
        <span>页面: 20/50</span>
        <StatusRule />
        <span>字数: 13400</span>
        <StatusRule $right={1} />
        <StatusButton type="button" $tint>
          <Glyph size={15} box={15}><path d="M6 1.500H.800V13.500H6L7.500 14.500 9 13.500H14.200V1.500H9M4.500 7l2.500 2.500 4-5" /></Glyph>
          拼写检查
        </StatusButton>
        <Caret />
        <StatusRule $left={4} $right={5} />
        <StatusButton type="button">
          <Glyph size={15} box={15}><path d="M6 1.500H.800V13.500H6L7.500 14.500 9 13.500H14.200V1.500H9M5 5l5 5M10 5l-5 5" /></Glyph>
          文档校对
        </StatusButton>
        <StatusText>兼容模式</StatusText>
        <StatusRule />
        <Watermark>CSDN @biyezuopin</Watermark>
      </StatusBar>
    </Shell>
  );
}
